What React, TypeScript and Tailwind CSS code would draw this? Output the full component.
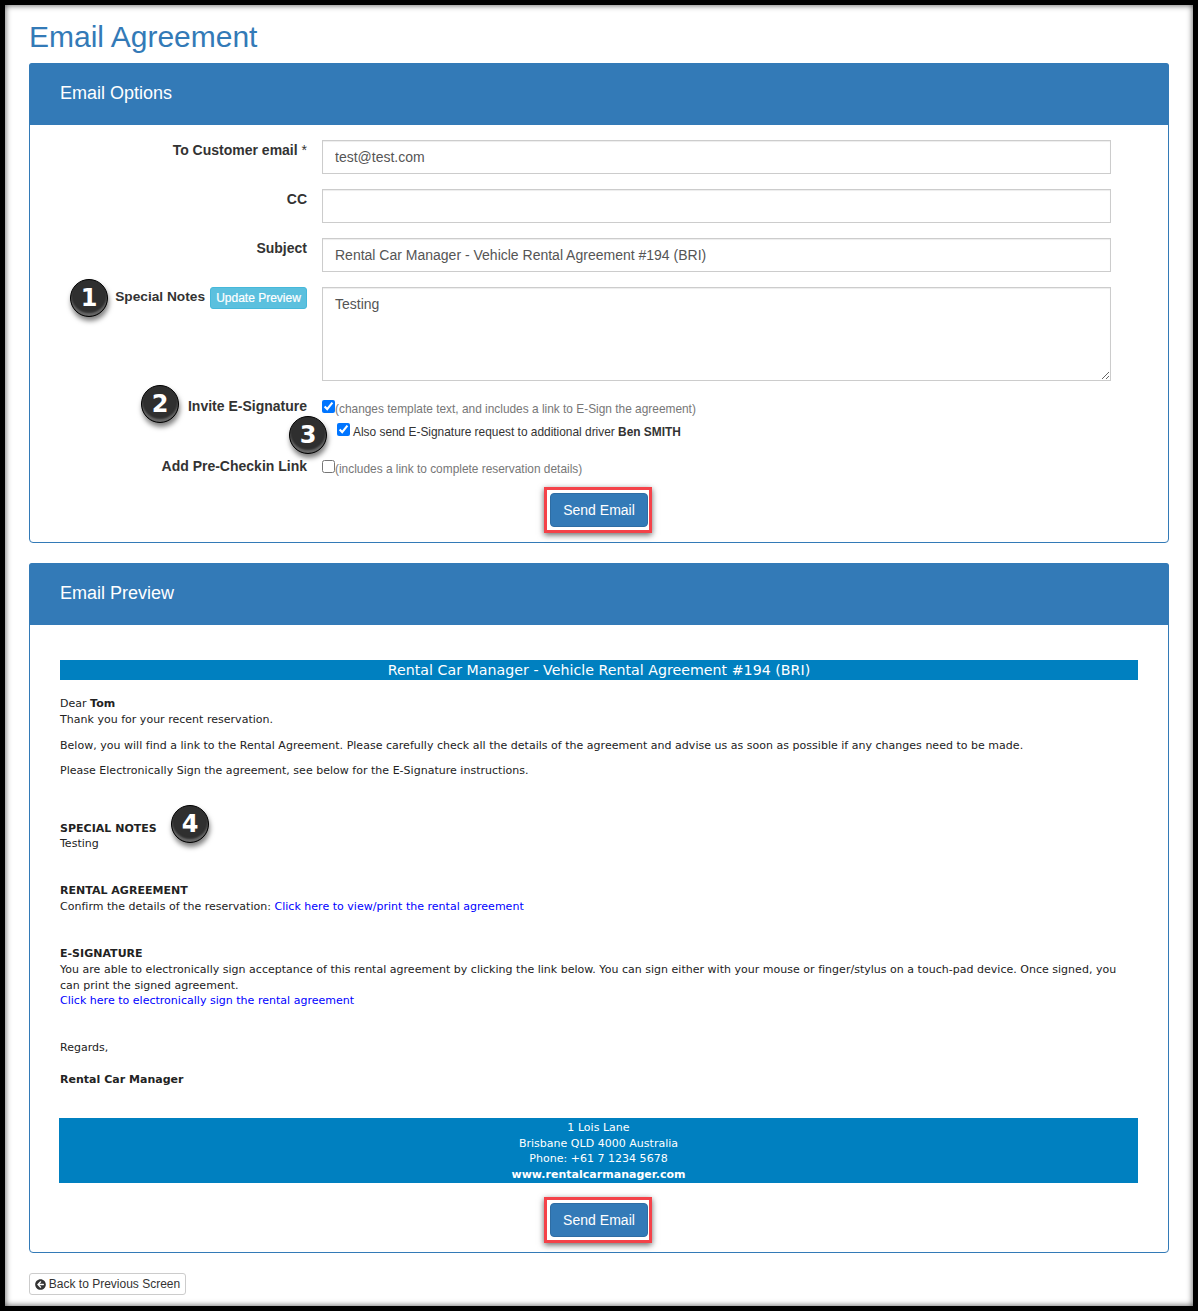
import { FaArrowCircleLeft } from "react-icons/fa";

function Badge({ n, className }: { n: number; className: string }) {
  return (
    <div
      className={`absolute w-[38px] h-[38px] rounded-full bg-[#2f2f2f] border border-black flex items-center justify-center text-white text-[24px] font-bold leading-none font-['DejaVu_Sans',sans-serif] shadow-[inset_0_-3px_2px_rgba(150,150,150,0.55),1px_4px_5px_rgba(0,0,0,0.5)] ${className}`}
    >
      {n}
    </div>
  );
}

function SendButton() {
  return (
    <div className="flex justify-center">
      <button className="mr-[2px] w-[108px] border-[3px] border-[#f44249] pl-[3px] pr-[1px] py-[3px] shadow-[0_2px_6px_rgba(0,0,0,0.6)] bg-white font-['Liberation_Sans',Arial,sans-serif]">
        <span className="block w-[98px] h-[34px] leading-[32px] bg-[#337ab7] border border-[#2e6da4] rounded text-white text-[14px] text-center">
          Send Email
        </span>
      </button>
    </div>
  );
}

function PanelHeader({ title }: { title: string }) {
  return (
    <div className="h-[62px] bg-[#337ab7] text-white text-[18px] pl-[31px] pb-[2px] flex items-center rounded-t-[3px] -mx-px -mt-px">
      {title}
    </div>
  );
}

const inputClass =
  "w-[789px] h-[34px] border border-[#ccc] px-3 text-[14px] text-[#555] bg-white shadow-[inset_0_1px_1px_rgba(0,0,0,0.075)] outline-none block";
const labelClass = "w-[277px] text-right text-[14px] font-bold text-[#333] leading-[20px]";

export default function App() {
  return (
    <div className="w-[1198px] h-[1311px] border-[5px] border-black px-[24px] bg-white shadow-[inset_0_0_6px_rgba(0,0,0,0.7)] font-['Liberation_Sans',Arial,sans-serif] text-[#333] overflow-hidden">
      <h1 className="text-[30px] leading-[33px] text-[#337ab7] pt-[15px] h-[58px]">Email Agreement</h1>

      {/* Email Options */}
      <div className="border border-[#337ab7] rounded h-[480px]">
        <PanelHeader title="Email Options" />
        <div className="pt-[15px]">
          <div className="flex gap-[15px] mb-[15px]">
            <label className={labelClass}>To Customer email <span className="font-normal">*</span></label>
            <input className={inputClass} defaultValue="test@test.com" />
          </div>
          <div className="flex gap-[15px] mb-[15px]">
            <label className={labelClass}>CC</label>
            <input className={inputClass} />
          </div>
          <div className="flex gap-[15px] mb-[15px]">
            <label className={labelClass}>Subject</label>
            <input className={inputClass} defaultValue="Rental Car Manager - Vehicle Rental Agreement #194 (BRI)" />
          </div>
          <div className="flex gap-[15px] mb-[15px] relative">
            <Badge n={1} className="left-[40px] top-[-8px]" />
            <div className="w-[277px] flex justify-end items-start gap-[5px]">
              <label className="text-[13.7px] font-bold leading-[20px]">Special Notes</label>
              <button className="h-[22px] w-[97px] bg-[#5bc0de] border border-[#46b8da] rounded-[3px] text-white text-[12px] [-webkit-text-stroke:0.2px_white]">
                Update Preview
              </button>
            </div>
            <textarea
              className="w-[789px] h-[94px] border border-[#ccc] px-3 py-[6px] text-[14px] text-[#555] leading-[20px] outline-none block shadow-[inset_0_1px_1px_rgba(0,0,0,0.075)]"
              defaultValue="Testing"
            />
          </div>

          <div className="flex gap-[15px] relative h-[27px]">
            <Badge n={2} className="left-[111px] top-[-11px]" />
            <label className={labelClass}>Invite E-Signature</label>
            <div className="flex items-start text-[11.9px] text-[#777] leading-[18px] pt-[4px]">
              <input type="checkbox" defaultChecked className="mt-0" />
              <span>(changes template text, and includes a link to E-Sign the agreement)</span>
            </div>
          </div>
          <div className="relative h-[37px] pl-[307px] flex items-start text-[11.9px] text-[#333] leading-[18px]">
            <Badge n={3} className="left-[259px] top-[-7px]" />
            <input type="checkbox" defaultChecked className="mt-0" />
            <span className="ml-[3px]">Also send E-Signature request to additional driver <b>Ben SMITH</b></span>
          </div>
          <div className="flex gap-[15px] h-[27px]">
            <label className={`${labelClass} -mt-[4px]`}>Add Pre-Checkin Link</label>
            <div className="flex items-start text-[11.9px] text-[#777] leading-[18px]">
              <input type="checkbox" className="mt-0" />
              <span>(includes a link to complete reservation details)</span>
            </div>
          </div>
          <SendButton />
        </div>
      </div>

      {/* Email Preview */}
      <div className="border border-[#337ab7] rounded h-[690px] mt-[20px]">
        <PanelHeader title="Email Preview" />
        <div className="pt-[35px] px-[30px] font-['DejaVu_Sans',Verdana,sans-serif] text-[11px] tracking-[0.018px] leading-[15.6px] text-[#222] relative">
          <div className="w-[1078px] h-[20px] leading-[20px] bg-[#0080c0] text-white text-[14.2px] text-center">
            Rental Car Manager - Vehicle Rental Agreement #194 (BRI)
          </div>
          <p className="mt-[16px]">Dear <b>Tom</b><br />Thank you for your recent reservation.</p>
          <p className="mt-[11px]">Below, you will find a link to the Rental Agreement. Please carefully check all the details of the agreement and advise us as soon as possible if any changes need to be made.</p>
          <p className="mt-[9px]">Please Electronically Sign the agreement, see below for the E-Signature instructions.</p>
          <div className="mt-[43px] relative leading-[15px]">
            <Badge n={4} className="left-[111px] top-[-16px]" />
            <b>SPECIAL NOTES</b><br />Testing
          </div>
          <div className="mt-[31.4px] leading-[16px]">
            <b>RENTAL AGREEMENT</b><br />
            Confirm the details of the reservation: <a className="text-[#0000ff]">Click here to view/print the rental agreement</a>
          </div>
          <div className="mt-[31.4px] w-[1078px] leading-[16px]">
            <b>E-SIGNATURE</b><br />
            You are able to electronically sign acceptance of this rental agreement by clicking the link below. You can sign either with your mouse or finger/stylus on a touch-pad device. Once signed, you can print the signed agreement.
            <a className="block text-[#0000ff] leading-[15px] -mt-px">Click here to electronically sign the rental agreement</a>
          </div>
          <p className="mt-[32px]">Regards,</p>
          <p className="mt-[16px] font-bold">Rental Car Manager</p>
          <div className="mt-[31px] -ml-px w-[1079px] h-[65px] bg-[#0080c0] text-white text-center pt-[1.7px]">
            1 Lois Lane<br />Brisbane QLD 4000 Australia<br />Phone: +61 7 1234 5678<br /><b>www.rentalcarmanager.com</b>
          </div>
          <div className="mt-[14px]">
            <SendButton />
          </div>
        </div>
      </div>

      <button className="mt-[20px] h-[22px] w-[157px] border border-[#ccc] rounded-[3px] bg-white text-[12px] text-[#333] flex items-center justify-center gap-[3px]">
        <FaArrowCircleLeft className="text-[11px]" /> Back to Previous Screen
      </button>
    </div>
  );
}
